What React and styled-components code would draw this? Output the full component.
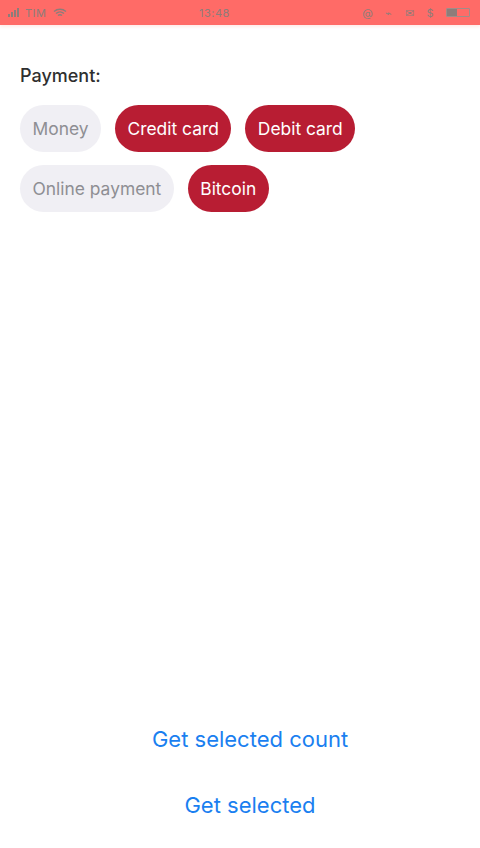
import { useState } from 'react';
import styled, { createGlobalStyle } from 'styled-components';

const GlobalStyle = createGlobalStyle`
  html, body {
    margin: 0;
    padding: 0;
    background: #ffffff;
  }
  body {
    font-family: 'Inter', 'Liberation Sans', Arial, sans-serif;
  }
`;

const OPTIONS = [
  { label: 'Money', selected: false },
  { label: 'Credit card', selected: true },
  { label: 'Debit card', selected: true },
  { label: 'Online payment', selected: false },
  { label: 'Bitcoin', selected: true },
];

const App = () => {
  const [items, setItems] = useState(OPTIONS);

  const toggle = (index) =>
    setItems((prev) =>
      prev.map((item, i) =>
        i === index ? { ...item, selected: !item.selected } : item
      )
    );

  return (
    <>
      <GlobalStyle />
      <Screen>
        <StatusBar>
          <StatusLeft>
            <Signal>
              <span />
              <span />
              <span />
              <span />
            </Signal>
            <StatusText>TIM</StatusText>
            <svg width='14' height='10' viewBox='0 0 14 10'>
              <path
                d='M1 3.5a9 9 0 0 1 12 0M3 5.6a6 6 0 0 1 8 0M5 7.6a3 3 0 0 1 4 0'
                fill='none'
                stroke='#8d7d7a'
                strokeWidth='1.4'
              />
            </svg>
          </StatusLeft>
          <StatusText>13:48</StatusText>
          <StatusRight>
            <StatusText>@</StatusText>
            <StatusText>⌁</StatusText>
            <StatusText>✉</StatusText>
            <StatusText>$</StatusText>
            <Battery />
          </StatusRight>
        </StatusBar>

        <Content>
          <Label>Payment:</Label>
          <Chips>
            {items.map((item, i) => (
              <Chip
                key={item.label}
                $selected={item.selected}
                onClick={() => toggle(i)}
              >
                {item.label}
              </Chip>
            ))}
          </Chips>
        </Content>

        <Actions>
          <LinkButton>Get selected count</LinkButton>
          <LinkButton>Get selected</LinkButton>
        </Actions>
      </Screen>
    </>
  );
};

export default App;

const Screen = styled.div`
  display: flex;
  flex-direction: column;
  width: 480px;
  height: 848px;
  background: #ffffff;
`;

const StatusBar = styled.div`
  display: flex;
  align-items: center;
  justify-content: space-between;
  height: 25px;
  padding: 0 10px 0 8px;
  background: #ff6b67;
  box-shadow: 0 2px 3px rgba(255, 150, 130, 0.18);
`;

const StatusLeft = styled.div`
  display: flex;
  align-items: center;
  gap: 6px;
`;

const StatusRight = styled.div`
  display: flex;
  align-items: center;
  gap: 12px;
`;

const StatusText = styled.span`
  font-size: 11px;
  color: #8d7d7a;
  letter-spacing: 0.5px;
`;

const Signal = styled.div`
  display: flex;
  align-items: flex-end;
  gap: 1px;
  height: 9px;

  span {
    width: 2px;
    background: #8d7d7a;
  }
  span:nth-child(1) { height: 3px; }
  span:nth-child(2) { height: 5px; }
  span:nth-child(3) { height: 7px; }
  span:nth-child(4) { height: 9px; }
`;

const Battery = styled.div`
  width: 22px;
  height: 7px;
  border: 1px solid #a08d89;
  border-radius: 1px;
  background: linear-gradient(90deg, #8d7d7a 45%, transparent 45%);
`;

const Content = styled.div`
  display: flex;
  flex-direction: column;
  padding: 40px 20px 0;
`;

const Label = styled.div`
  font-size: 18px;
  font-weight: 500;
  color: #2f2f2f;
  line-height: 22px;
  margin-bottom: 18px;
`;

const Chips = styled.div`
  display: flex;
  flex-wrap: wrap;
  gap: 13px 14px;
`;

const Chip = styled.button`
  height: 47px;
  padding: 0 12.5px;
  border: none;
  border-radius: 24px;
  font-family: inherit;
  font-size: 17.4px;
  cursor: pointer;
  background: ${(p) => (p.$selected ? '#b81d33' : '#f0eff4')};
  color: ${(p) => (p.$selected ? '#ffffff' : '#8e8e93')};
`;

const Actions = styled.div`
  display: flex;
  flex-direction: column;
  align-items: center;
  gap: 22px;
  margin-top: auto;
  padding: 0 0 21px 20px;
`;

const LinkButton = styled.button`
  height: 44px;
  border: none;
  background: none;
  font-family: inherit;
  font-size: 22px;
  color: #1a7ff0;
  cursor: pointer;
`;
